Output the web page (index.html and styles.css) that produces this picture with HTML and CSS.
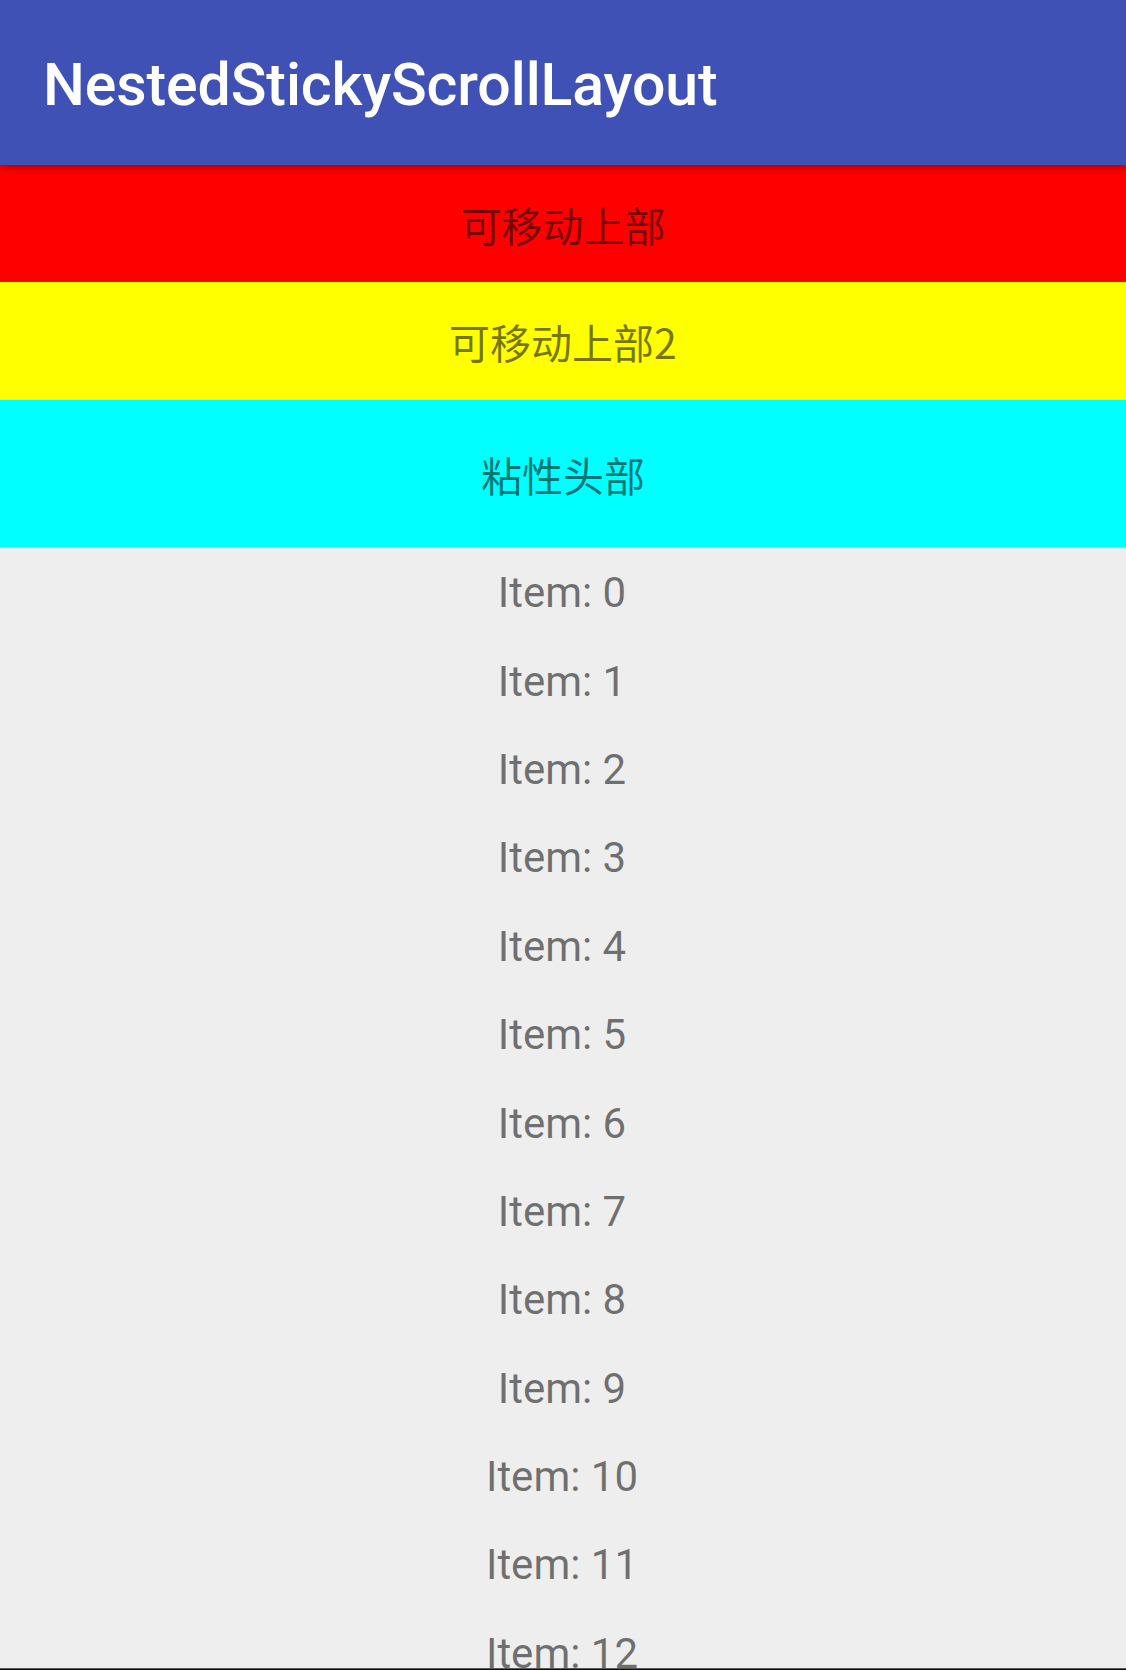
FILE: index.html
```html
<!DOCTYPE html>
<html lang="zh">
<head>
<meta charset="utf-8">
<title>NestedStickyScrollLayout</title>
<link rel="stylesheet" href="styles.css">
</head>
<body>
<div class="app">
  <header class="toolbar">
    <h1 class="title">NestedStickyScrollLayout</h1>
  </header>
  <div class="content">
    <div class="band band-red">可移动上部</div>
    <div class="band band-yellow">可移动上部2</div>
    <div class="band band-cyan">粘性头部</div>
    <ul class="list">
      <li class="item">Item: 0</li>
      <li class="item">Item: 1</li>
      <li class="item">Item: 2</li>
      <li class="item">Item: 3</li>
      <li class="item">Item: 4</li>
      <li class="item">Item: 5</li>
      <li class="item">Item: 6</li>
      <li class="item">Item: 7</li>
      <li class="item">Item: 8</li>
      <li class="item">Item: 9</li>
      <li class="item">Item: 10</li>
      <li class="item">Item: 11</li>
      <li class="item">Item: 12</li>
      <li class="item">Item: 13</li>
    </ul>
  </div>
  <div class="nav-edge"></div>
</div>
</body>
</html>
```
FILE: styles.css
```css
html, body {
  margin: 0;
  padding: 0;
  background: #eeeeee;
}

.app {
  width: 1126px;
  height: 1670px;
  display: flex;
  flex-direction: column;
  overflow: hidden;
  background: #eeeeee;
  font-family: Roboto, "Noto Sans CJK SC", sans-serif;
}

.toolbar {
  position: relative;
  z-index: 2;
  flex: 0 0 165px;
  background: #3f51b5;
  display: flex;
  align-items: center;
  padding: 5px 0 0 43px;
  box-sizing: border-box;
  box-shadow: 0 3px 8px rgba(0, 0, 0, 0.3);
}

.title {
  margin: 0;
  color: #ffffff;
  font-family: Roboto, sans-serif;
  font-weight: 500;
  font-size: 59px;
  line-height: 70px;
  letter-spacing: -0.1px;
}

.content {
  flex: 1 1 auto;
  display: flex;
  flex-direction: column;
  overflow: hidden;
}

.band {
  display: flex;
  align-items: center;
  justify-content: center;
  font-family: "Noto Sans CJK SC", Roboto, sans-serif;
  font-size: 41px;
  line-height: 50px;
  color: rgba(0, 0, 0, 0.54);
}

.band-red {
  flex: 0 0 117px;
  background: #ff0000;
}

.band-yellow {
  flex: 0 0 118px;
  background: #ffff00;
}

.band-cyan {
  flex: 0 0 147px;
  background: #00ffff;
}

.list {
  list-style: none;
  margin: 0;
  padding: 2px 0 0;
  flex: 1 1 auto;
  overflow: hidden;
}

.item {
  height: 88.4px;
  display: flex;
  align-items: center;
  justify-content: center;
  padding-right: 2px;
  font-family: Roboto, sans-serif;
  font-size: 42px;
  line-height: 50px;
  color: rgba(0, 0, 0, 0.54);
}

.nav-edge {
  flex: 0 0 2px;
  background: linear-gradient(#555555 0 1px, #111111 1px 2px);
}
```
